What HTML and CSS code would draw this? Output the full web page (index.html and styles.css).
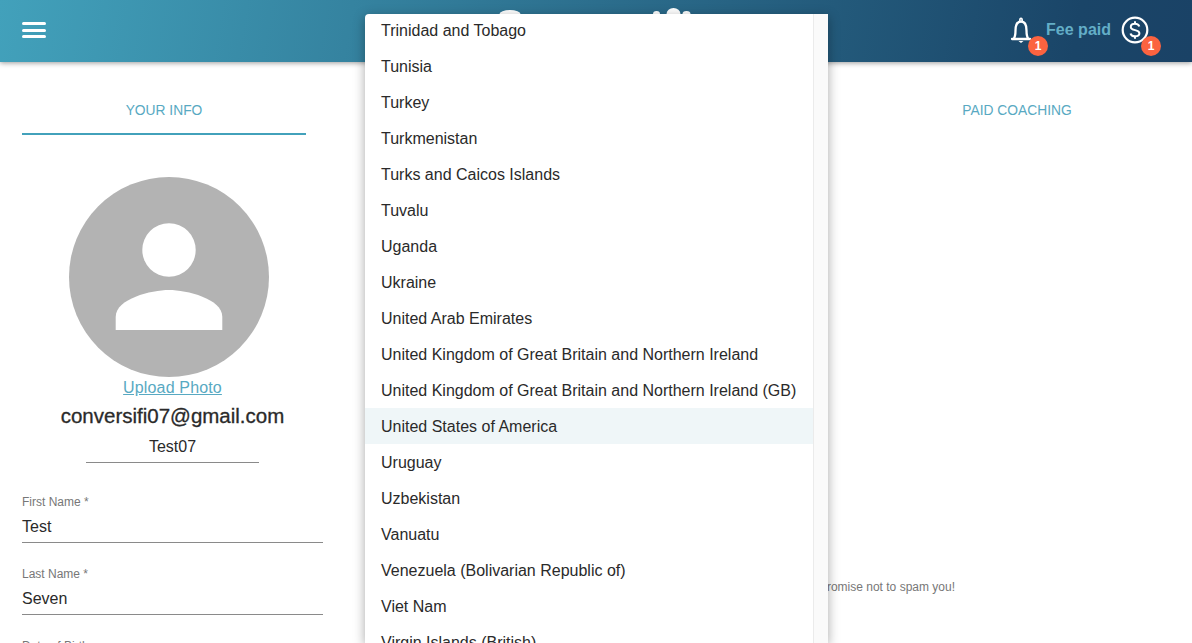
FILE: index.html
```html
<!DOCTYPE html>
<html lang="en">
<head>
    <meta charset="UTF-8">
    <title>Profile</title>
    <link rel="stylesheet" href="styles.css">
</head>
<body>
    <header class="topbar">
        <button class="menu-btn" aria-label="menu">
            <span></span><span></span><span></span>
        </button>
        <div class="logo">
            <svg width="210" height="14" viewBox="0 0 210 14" fill="#fff">
                <ellipse cx="15" cy="14" rx="10.500" ry="4"/>
                <ellipse cx="161.500" cy="14" rx="3.500" ry="3"/>
                <ellipse cx="178.500" cy="14" rx="7" ry="6"/>
                <ellipse cx="191.500" cy="14" rx="4" ry="3"/>
            </svg>
        </div>
        <div class="topbar-right">
            <div class="icon-wrap">
                <svg width="26" height="28" viewBox="0 0 26 28" fill="none" stroke="#fff" stroke-width="2.300" stroke-linecap="round">
                    <path d="M4 23h18M5.500 23c1.800-2 2-4.500 2-8.500 0-5 1.800-9 5.500-9s5.500 4 5.500 9c0 4 .2 6.500 2 8.500"/>
                    <path d="M11.800 4.500c0-2.800 2.400-2.800 2.400 0" stroke-width="1.600"/>
                    <path d="M10.500 25h5l-2.500 2z" fill="#fff" stroke="none"/>
                </svg>
                <span class="badge badge-bell">1</span>
            </div>
            <span class="fee">Fee paid</span>
            <div class="icon-wrap">
                <svg width="30" height="30" viewBox="0 0 30 30" fill="none" stroke="#fff">
                    <circle cx="15" cy="15" r="12.300" stroke-width="2.200"/>
                    <path d="M19.300 11.500c-.5-1.800-2.200-2.800-4.300-2.800-2.400 0-4.200 1.300-4.200 3.200 0 4.400 8.600 2.100 8.600 6.300 0 1.900-1.900 3.100-4.400 3.100-2.300 0-4-1-4.500-2.900M15 6.200v2.500M15 21.300v2.500" stroke-width="2"/>
                </svg>
                <span class="badge badge-fee">1</span>
            </div>
        </div>
    </header>

    <main class="content">
        <section class="left-col">
            <div class="tab tab-active">YOUR INFO</div>
            <div class="profile">
                <div class="avatar">
                    <svg width="200" height="200" viewBox="0 0 200 200" fill="#fff">
                        <circle cx="100" cy="73" r="26.700"/>
                        <path d="M100 113c-17.800 0-53.300 8.900-53.300 26.700v13.300h106.600v-13.300c0-17.800-35.500-26.700-53.300-26.700z"/>
                    </svg>
                </div>
                <a class="upload" href="#">Upload Photo</a>
                <div class="email">conversifi07@gmail.com</div>
                <div class="nick">Test07</div>
            </div>
            <div class="field">
                <label>First Name *</label>
                <div class="value">Test</div>
            </div>
            <div class="field">
                <label>Last Name *</label>
                <div class="value">Seven</div>
            </div>
            <div class="field">
                <label>Date of Birth</label>
            </div>
        </section>
        <section class="right-col">
            <div class="tab tab-right">PAID COACHING</div>
            <p class="spam-note">We promise not to spam you!</p>
        </section>
    </main>

    <div class="dropdown">
        <ul class="dropdown-list">
            <li>Trinidad and Tobago</li>
            <li>Tunisia</li>
            <li>Turkey</li>
            <li>Turkmenistan</li>
            <li>Turks and Caicos Islands</li>
            <li>Tuvalu</li>
            <li>Uganda</li>
            <li>Ukraine</li>
            <li>United Arab Emirates</li>
            <li>United Kingdom of Great Britain and Northern Ireland</li>
            <li>United Kingdom of Great Britain and Northern Ireland (GB)</li>
            <li class="selected">United States of America</li>
            <li>Uruguay</li>
            <li>Uzbekistan</li>
            <li>Vanuatu</li>
            <li>Venezuela (Bolivarian Republic of)</li>
            <li>Viet Nam</li>
            <li>Virgin Islands (British)</li>
        </ul>
        <div class="scroll-track"></div>
    </div>
</body>
</html>
```

FILE: styles.css
```css
html, body {
    margin: 0;
    padding: 0;
    height: 100%;
    overflow: hidden;
}
body {
    font-family: "Liberation Sans", Arial, sans-serif;
    color: #2a2a2a;
    background: #fff;
}

/* top bar */
.topbar {
    height: 62px;
    display: flex;
    align-items: center;
    padding: 0 42px 0 22px;
    background: linear-gradient(100deg, #42a1bb 0%, #1a4568 90%, #1a4266 100%);
    box-shadow: 0 1px 5px rgba(0, 0, 0, .4);
    position: relative;
}
.menu-btn {
    width: 24px;
    display: flex;
    flex-direction: column;
    gap: 3.500px;
    padding: 0;
    margin-top: -2px;
    border: 0;
    background: none;
}
.menu-btn span {
    height: 3px;
    border-radius: 2px;
    background: #fff;
}
.logo {
    align-self: flex-start;
    margin-left: 449px;
    line-height: 0;
}
.topbar-right {
    margin-left: auto;
    display: flex;
    align-items: center;
    gap: 9px;
    margin-top: -2px;
}
.icon-wrap {
    position: relative;
    line-height: 0;
}
.fee {
    margin-left: 3px;
    font-size: 16px;
    font-weight: bold;
    color: #63aec7;
}
.badge {
    position: absolute;
    width: 20px;
    height: 20px;
    border-radius: 50%;
    background: #fb6340;
    color: #fff;
    font-size: 12px;
    font-weight: bold;
    line-height: 20px;
    text-align: center;
}
.badge-bell {
    right: -14px;
    bottom: -12px;
}
.badge-fee {
    right: -11px;
    bottom: -11px;
}

/* page */
.content {
    display: flex;
    justify-content: space-between;
}
.left-col {
    width: 301px;
    margin-left: 22px;
}
.right-col {
    width: 413px;
}
.tab {
    height: 71px;
    line-height: 98px;
    font-size: 13.800px;
    color: #58a9c2;
    text-align: center;
}
.tab-active {
    width: 284px;
    border-bottom: 2px solid #42a1bb;
}
.tab-right {
    padding-left: 63px;
}
.profile {
    display: flex;
    flex-direction: column;
    align-items: center;
    padding-top: 42px;
}
.avatar {
    width: 200px;
    height: 200px;
    border-radius: 50%;
    background: #b3b3b3;
    line-height: 0;
    margin-left: -7px;
}
.upload {
    margin-top: 1px;
    font-size: 16px;
    letter-spacing: .15px;
    line-height: 19px;
    color: #58a9c2;
}
.email {
    margin-top: 8px;
    font-size: 20.500px;
    line-height: 22px;
    -webkit-text-stroke: .3px #2a2a2a;
}
.nick {
    margin-top: 9px;
    width: 173px;
    height: 26px;
    line-height: 21px;
    font-size: 16px;
    text-align: center;
    border-bottom: 1px solid #8a8a8a;
}
.field {
    margin-top: 32px;
}
.field + .field {
    margin-top: 24px;
}
.field label {
    display: block;
    font-size: 12px;
    line-height: 14px;
    color: #777;
}
.value {
    margin-top: 6px;
    height: 27px;
    font-size: 16px;
    line-height: 24px;
    border-bottom: 1px solid #8a8a8a;
}
.spam-note {
    margin: 447px 0 0 0;
    width: 176px;
    font-size: 12px;
    line-height: 14px;
    color: #777;
    text-align: right;
}

/* country select menu */
.dropdown {
    position: absolute;
    top: 14px;
    left: 365px;
    width: 463px;
    bottom: 0;
    display: flex;
    overflow: hidden;
    background: #fff;
    border-radius: 4px 0 0 0;
    box-shadow: 0 3px 12px rgba(0, 0, 0, .35);
}
.dropdown-list {
    flex: 1;
    list-style: none;
    margin: -2px 0 0;
    padding: 0;
}
.dropdown-list li {
    height: 36px;
    line-height: 38px;
    padding-left: 16px;
    font-size: 16px;
    white-space: nowrap;
}
.dropdown-list li.selected {
    background: #eff6f8;
}
.scroll-track {
    width: 14px;
    background: #fafafa;
    border-left: 1px solid #ebebeb;
}
```
